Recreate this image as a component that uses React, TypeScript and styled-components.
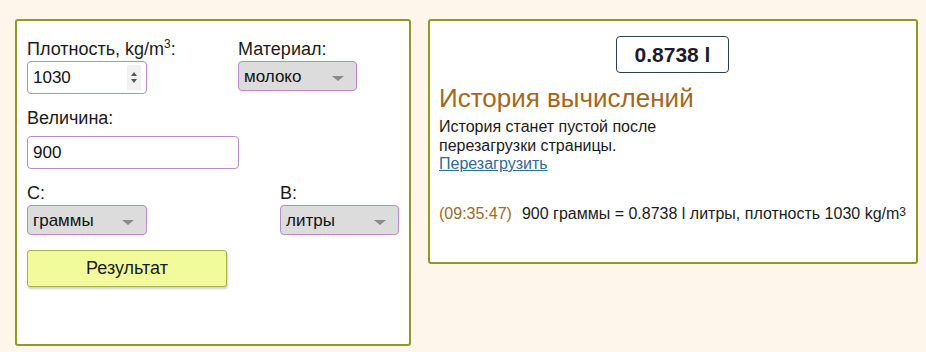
import * as React from "react";
import styled, { createGlobalStyle } from "styled-components";

const GlobalStyle = createGlobalStyle`
    body {
        margin: 0;
        background: #fef6eb;
        font-family: "Liberation Sans", Arial, sans-serif;
        color: #1b1b1b;
    }
`;

const Page = styled.div`
    display: flex;
    align-items: flex-start;
    gap: 17px;
    padding: 19px 0 0 15px;
`;

const Panel = styled.div<{ $width: number; $height: number }>`
    box-sizing: border-box;
    width: ${(p) => p.$width}px;
    height: ${(p) => p.$height}px;
    background: #ffffff;
    border: 2px solid #8f9a24;
    border-radius: 3px;
`;

const FormPanel = styled(Panel)`
    display: flex;
    flex-direction: column;
    padding: 18px 10px 0 10px;
`;

const Row = styled.div`
    display: flex;
`;

const Field = styled.div<{ $width?: number; $mb?: number }>`
    display: flex;
    flex-direction: column;
    width: ${(p) => (p.$width ? `${p.$width}px` : "auto")};
    margin-bottom: ${(p) => p.$mb ?? 0}px;
`;

const Label = styled.label<{ $mb?: number }>`
    font-size: 18px;
    line-height: 21px;
    margin-bottom: ${(p) => p.$mb ?? 2}px;
    sup {
        font-size: 12px;
        line-height: 0;
    }
`;

const InputBox = styled.div<{ $width: number }>`
    box-sizing: border-box;
    display: flex;
    align-items: center;
    width: ${(p) => p.$width}px;
    height: 33px;
    border: 1px solid #b98cc9;
    border-radius: 4px;
    background: #fff;
    padding: 0 5px 0 5px;
`;

const TextInput = styled.input`
    flex: 1;
    min-width: 0;
    border: none;
    outline: none;
    background: transparent;
    padding: 0;
    font-family: inherit;
    font-size: 17px;
    color: #111;
`;

const Spinner = styled.span`
    display: flex;
    flex-direction: column;
    align-items: center;
    justify-content: center;
    gap: 3px;
    width: 14px;
    height: 25px;
    background: #f1f1f1;
    &::before,
    &::after {
        content: "";
        width: 0;
        height: 0;
        border-left: 3.5px solid transparent;
        border-right: 3.5px solid transparent;
    }
    &::before {
        border-bottom: 4px solid #555;
    }
    &::after {
        border-top: 4px solid #555;
    }
`;

const SelectBox = styled.div<{ $width: number }>`
    box-sizing: border-box;
    display: flex;
    align-items: center;
    width: ${(p) => p.$width}px;
    height: 30px;
    border: 1px solid #b98cc9;
    border-radius: 4px;
    background: #dcdcdc;
    padding: 0 12px 0 5px;
`;

const NativeSelect = styled.select`
    flex: 1;
    min-width: 0;
    appearance: none;
    border: none;
    outline: none;
    background: transparent;
    padding: 0;
    font-family: "Liberation Sans", Arial, sans-serif;
    font-size: 17px;
    color: #111;
`;

const Arrow = styled.span`
    width: 0;
    height: 0;
    margin-top: 4px;
    border-left: 6px solid transparent;
    border-right: 6px solid transparent;
    border-top: 5px solid #8a8a8a;
`;

const ResultButton = styled.button`
    box-sizing: border-box;
    width: 200px;
    height: 37px;
    margin-top: 15px;
    border: 1px solid #aab24a;
    border-radius: 3px;
    background: #f1fb9c;
    box-shadow: 1px 2px 2px rgba(0, 0, 0, 0.18);
    font-family: inherit;
    font-size: 18px;
    color: #1b1b1b;
    cursor: pointer;
`;

const HistoryPanel = styled(Panel)`
    display: flex;
    flex-direction: column;
    padding: 15px 10px 0 9px;
`;

const ResultValue = styled.div`
    align-self: center;
    box-sizing: border-box;
    padding: 0 18px;
    height: 37px;
    display: flex;
    align-items: center;
    border: 1px solid #2b3f52;
    border-radius: 4px;
    font-size: 21px;
    font-weight: bold;
    color: #1c1a30;
`;

const Title = styled.h2`
    margin: 10px 0 5px;
    font-size: 26px;
    line-height: 30px;
    font-weight: normal;
    color: #a6661c;
`;

const Note = styled.p`
    margin: 0;
    font-size: 16px;
    line-height: 18.5px;
    color: #1b1b1b;
`;

const ReloadLink = styled.a`
    color: #2a6c9b;
    text-decoration: underline;
    cursor: pointer;
`;

const HistoryLine = styled.div`
    margin-top: 30px;
    font-size: 16px;
    line-height: 20px;
    color: #1b1b1b;
    sup {
        font-size: 12px;
        line-height: 0;
        vertical-align: 3px;
    }
`;

const Time = styled.span`
    color: #9b6a2c;
    margin-right: 10px;
`;

export default function App() {
    return (
        <>
            <GlobalStyle />
            <Page>
                <FormPanel $width={396} $height={327}>
                    <Row>
                        <Field $width={211} $mb={14}>
                            <Label $mb={1}>
                                Плотность, kg/m<sup>3</sup>:
                            </Label>
                            <InputBox $width={120}>
                                <TextInput defaultValue="1030" />
                                <Spinner />
                            </InputBox>
                        </Field>
                        <Field>
                            <Label $mb={1}>Материал:</Label>
                            <SelectBox $width={119}>
                                <NativeSelect defaultValue="milk">
                                    <option value="milk">молоко</option>
                                </NativeSelect>
                                <Arrow />
                            </SelectBox>
                        </Field>
                    </Row>
                    <Field $mb={14}>
                        <Label $mb={7}>Величина:</Label>
                        <InputBox $width={212}>
                            <TextInput defaultValue="900" />
                        </InputBox>
                    </Field>
                    <Row>
                        <Field $width={254}>
                            <Label $mb={1}>С:</Label>
                            <SelectBox $width={120}>
                                <NativeSelect defaultValue="g">
                                    <option value="g">граммы</option>
                                </NativeSelect>
                                <Arrow />
                            </SelectBox>
                        </Field>
                        <Field>
                            <Label $mb={1}>В:</Label>
                            <SelectBox $width={119}>
                                <NativeSelect defaultValue="l">
                                    <option value="l">литры</option>
                                </NativeSelect>
                                <Arrow />
                            </SelectBox>
                        </Field>
                    </Row>
                    <ResultButton>Результат</ResultButton>
                </FormPanel>
                <HistoryPanel $width={490} $height={245}>
                    <ResultValue>0.8738 l</ResultValue>
                    <Title>История вычислений</Title>
                    <Note>
                        История станет пустой после
                        <br />
                        перезагрузки страницы.
                        <br />
                        <ReloadLink>Перезагрузить</ReloadLink>
                    </Note>
                    <HistoryLine>
                        <Time>(09:35:47)</Time>
                        900 граммы = 0.8738 l литры, плотность 1030 kg/m
                        <sup>3</sup>
                    </HistoryLine>
                </HistoryPanel>
            </Page>
        </>
    );
}
